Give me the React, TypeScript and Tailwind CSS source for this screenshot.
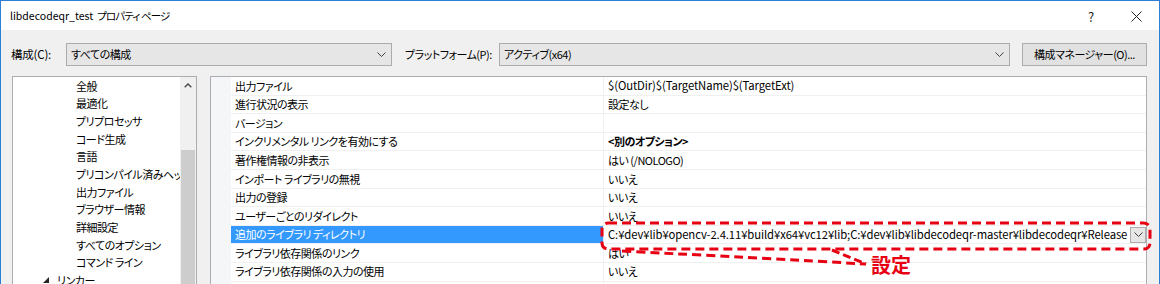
import React from "react";

const JP = "text-[11px] tracking-[-0.5px]";
const LAT = "text-[11.3px] tracking-[-0.1px]";
const hasJp = (s: string) => /[\u3000-\u9fff\uff00-\uffef]/.test(s);
const fc = (s: string) => (hasJp(s) ? JP : LAT);

const Chevron = () => (
  <svg width="9" height="5" viewBox="0 0 9 5">
    <path d="M0.5 0.5 L4.5 4.5 L8.5 0.5" fill="none" stroke="#404040" strokeWidth="1" />
  </svg>
);

const treeItems = [
  "全般",
  "最適化",
  "プリプロセッサ",
  "コード生成",
  "言語",
  "プリコンパイル済みヘッダー",
  "出力ファイル",
  "ブラウザー情報",
  "詳細設定",
  "すべてのオプション",
  "コマンド ライン",
];

const rows: { name: string; value: string; bold?: boolean; selected?: boolean }[] = [
  { name: "出力ファイル", value: "$(OutDir)$(TargetName)$(TargetExt)" },
  { name: "進行状況の表示", value: "設定なし" },
  { name: "バージョン", value: "" },
  { name: "インクリメンタル リンクを有効にする", value: "<別のオプション>", bold: true },
  { name: "著作権情報の非表示", value: "はい (/NOLOGO)" },
  { name: "インポート ライブラリの無視", value: "いいえ" },
  { name: "出力の登録", value: "いいえ" },
  { name: "ユーザーごとのリダイレクト", value: "いいえ" },
  {
    name: "追加のライブラリ ディレクトリ",
    value: "C:¥dev¥lib¥opencv-2.4.11¥build¥x64¥vc12¥lib;C:¥dev¥lib¥libdecodeqr-master¥libdecodeqr¥Release",
    selected: true,
  },
  { name: "ライブラリ依存関係のリンク", value: "はい" },
  { name: "ライブラリ依存関係の入力の使用", value: "いいえ" },
  { name: "モジュール定義ファイル", value: "" },
];

export default function App() {
  return (
    <div className="relative w-[1160px] h-[284px] overflow-hidden border-t border-l border-r border-[#2b7fd4] bg-[#f0f0f0] flex flex-col font-['Noto_Sans_CJK_JP',sans-serif] [font-feature-settings:'palt'] text-[12px] text-black">
      {/* Title bar */}
      <div className="h-[29px] shrink-0 bg-white flex items-center pl-[9px] relative whitespace-nowrap">
        <span className="text-[10.5px]">libdecodeqr_test</span>
        <span className="text-[10.5px] tracking-[-0.9px] ml-[4px]">プロパティ ページ</span>
        <span className="absolute left-[1087px] top-[6px] text-[13px] text-[#222]">?</span>
        <svg className="absolute left-[1130px] top-[10px]" width="11" height="11" viewBox="0 0 11 11">
          <path d="M0.5 0.5 L10.5 10.5 M10.5 0.5 L0.5 10.5" stroke="#222" strokeWidth="1" />
        </svg>
      </div>

      {/* Toolbar */}
      <div className="mt-[13px] h-[23px] shrink-0 flex items-center pl-[10px] whitespace-nowrap">
        <span className="w-[55px] shrink-0 text-[11.5px] tracking-[-0.2px]">構成(C):</span>
        <div className="w-[326px] shrink-0 h-[23px] bg-[#e6e6e6] border border-[#acacac] flex items-center justify-between pl-[4px] pr-[5px]">
          <span className={JP}>すべての構成</span>
          <Chevron />
        </div>
        <span className={"ml-[13px] w-[94px] shrink-0 " + JP}>プラットフォーム(P):</span>
        <div className="w-[511px] shrink-0 h-[23px] bg-[#e6e6e6] border border-[#acacac] flex items-center justify-between pl-[4px] pr-[5px]">
          <span className={JP}>アクティブ(x64)</span>
          <Chevron />
        </div>
        <div className={"ml-[12px] w-[125px] shrink-0 h-[23px] bg-[#e1e1e1] border border-[#adadad] flex items-center justify-center " + JP}>
          構成マネージャー(O)...
        </div>
      </div>

      {/* Panels */}
      <div className="mt-[10px] flex flex-1 min-h-0 pl-[11px]">
        {/* Tree */}
        <div className="w-[185px] shrink-0 bg-white border border-[#abadb3] border-b-0 flex">
          <div className="flex-1 min-w-0 overflow-hidden">
            {treeItems.map((t) => (
              <div key={t} className={"h-[17.7px] flex items-center pl-[63px] whitespace-nowrap " + JP}>
                {t}
              </div>
            ))}
            <div className={"h-[17.7px] flex items-center pl-[30px] whitespace-nowrap " + JP}>
              <svg width="6" height="6" viewBox="0 0 6 6" className="mr-[8px]">
                <path d="M6 0 L6 6 L0 6 Z" fill="#262626" />
              </svg>
              リンカー
            </div>
          </div>
          <div className="w-[16px] shrink-0 bg-[#f0f0f0] flex flex-col">
            <div className="h-[17px] flex items-center justify-center">
              <svg width="8" height="5" viewBox="0 0 8 5">
                <path d="M0.7 4.3 L4 1 L7.3 4.3" fill="none" stroke="#505050" strokeWidth="1.5" />
              </svg>
            </div>
            <div className="h-[56px]" />
            <div className="flex-1 mx-[1px] bg-[#cdcdcd]" />
          </div>
        </div>

        {/* Property grid */}
        <div className="ml-[13px] w-[937px] shrink-0 bg-white border border-[#abadb3] border-b-0 flex overflow-hidden">
          <div className="w-[20px] shrink-0 bg-[#f5f6f8]" />
          <div className="flex-1 min-w-0 flex flex-col">
            {rows.map((r) => (
              <div key={r.name} className="h-[18.6px] shrink-0 flex border-b border-[#f0f0f0]">
                <div
                  className={
                    "w-[372px] shrink-0 pl-[4px] flex items-center whitespace-nowrap " +
                    JP +
                    (r.selected ? " bg-[#3399ff] text-white" : "")
                  }
                >
                  {r.name}
                </div>
                <div className="flex-1 min-w-0 border-l border-[#f0f0f0] pl-[4px] flex items-center justify-between whitespace-nowrap">
                  <span className={fc(r.value) + (r.bold ? " font-bold" : "")}>{r.value}</span>
                  {r.selected && (
                    <div className="w-[16px] h-[16px] shrink-0 bg-[#e6e6e6] border border-[#acacac] flex items-center justify-center">
                      <Chevron />
                    </div>
                  )}
                </div>
              </div>
            ))}
          </div>
        </div>
      </div>

      {/* Annotation overlay */}
      <svg className="absolute left-[-1px] top-[-1px] pointer-events-none" width="1160" height="284" viewBox="0 0 1160 284">
        <rect x="602" y="223" width="548" height="26" rx="6" fill="none" stroke="#e60012" strokeWidth="3" strokeDasharray="9 5" />
        <path d="M622 251 Q 760 258 866 264" fill="none" stroke="#e60012" strokeWidth="3" strokeDasharray="9 5" />
        <path d="M832 250 L866 264" fill="none" stroke="#e60012" strokeWidth="3" strokeDasharray="8 4" />
      </svg>
      <div className="absolute left-[870px] top-[254px] text-[20px] font-bold text-[#e60012] leading-none">設定</div>
    </div>
  );
}
